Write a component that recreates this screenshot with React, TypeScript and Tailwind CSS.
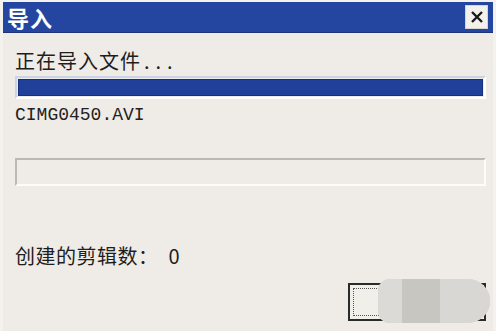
export default function App() {
  const cjk = { fontFamily: '"Noto Sans CJK SC", "Noto Sans", sans-serif' }
  return (
    <div className="w-[496px] h-[331px] bg-[#f4f2ef] pt-[2px] px-[3px] overflow-hidden">
      <div className="h-[329px] bg-[#efebe6] flex flex-col">
        {/* title bar */}
        <div className="h-[31px] bg-[#2546a0] flex items-center justify-between pl-[4px] pr-[5px] border-b border-[#1c3478]">
          <span className="text-white text-[22px] font-bold leading-none tracking-[1px]" style={cjk}>
            导入
          </span>
          <div className="w-[23px] h-[24px] bg-[#f3f1ec] border border-[#d8d4cc] flex items-center justify-center">
            <svg width="14" height="14" viewBox="0 0 14 14">
              <path d="M2 2 L12 12 M12 2 L2 12" stroke="#1a1a1a" strokeWidth="2.4" />
            </svg>
          </div>
        </div>

        <div className="flex flex-col pl-[12px] pr-[7px]">
          <div className="mt-[16px] text-[20px] leading-[23px] text-[#1e1e1e] tracking-[1px] whitespace-pre" style={cjk}>
            正在导入文件<span className="ml-[3px] tracking-[6px]">...</span>
          </div>
          <div className="mt-[4px] h-[23px] border-t-2 border-l-2 border-[#c9d3ea] border-r-2 border-b-2 border-r-white border-b-white p-[1px]">
            <div className="h-full bg-[#21409a] border border-[#17307a]" />
          </div>
          <div
            className="mt-[6px] text-[18px] leading-[20px] text-[#222]"
            style={{ fontFamily: '"Liberation Mono", monospace' }}
          >
            CIMG0450.AVI
          </div>
          <div className="mt-[33px] h-[28px] border-t-2 border-l-2 border-[#bcb8b2] border-r-2 border-b-2 border-r-[#fdfcfa] border-b-[#fdfcfa]" />
          <div className="mt-[58px] text-[20px] leading-[23px] text-[#1e1e1e] tracking-[0.5px] whitespace-pre" style={cjk}>
            创建的剪辑数：  0
          </div>
          <div className="mt-[16px] flex justify-end">
            <div className="relative w-[138px] h-[38px] border-2 border-[#2a2a2a] bg-[#f1efea] p-[3px]">
              <div className="w-full h-full border border-dotted border-[#555]" />
              <div className="absolute left-[28px] top-[-6px] w-[112px] h-[44px] rounded-r-[22px] rounded-l-[12px] bg-[#d3d1cc] flex overflow-hidden">
                <div className="w-[24px] bg-[#dcdad6]" />
                <div className="w-[38px] bg-[#c8c6c1]" />
                <div className="flex-1 bg-[#d9d7d3]" />
              </div>
            </div>
          </div>
        </div>
      </div>
    </div>
  )
}
